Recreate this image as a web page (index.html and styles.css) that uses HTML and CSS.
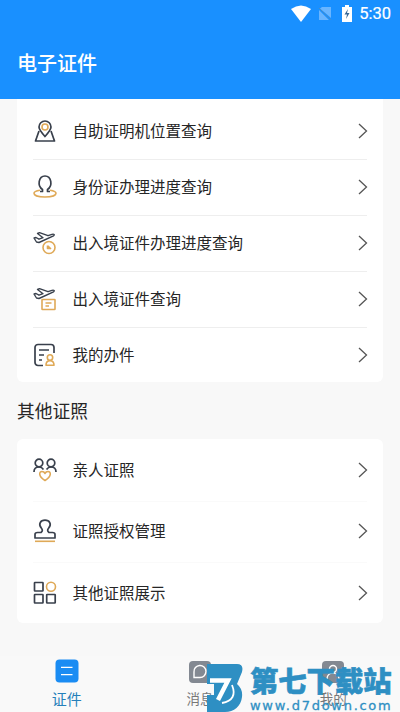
FILE: index.html
```html
<!DOCTYPE html>
<html lang="zh-CN">
<head>
<meta charset="utf-8">
<title>电子证件</title>
<link rel="stylesheet" href="styles.css">
</head>
<body>
<div class="app">
  <header class="header">
    <div class="status">
      <svg class="wifi" width="20" height="17" viewBox="0 0 20 17"><path d="M0 4Q10-3 20 4L10 17Z" fill="#fff"/></svg>
      <svg class="sim" width="14" height="15" viewBox="0 0 14 15"><path d="M4 1h9v11L2 2.500ZM1 4v10h10Z" fill="#69b5ff"/><path d="M1 2l12 12" stroke="#438dcc"/></svg>
      <svg class="battery" width="10" height="17" viewBox="0 0 10 17"><path d="M3 0h4v2h3v15H0V2h3Z" fill="#fff"/><path d="M6 4L2.500 9.500H5L4 14l3.500-6H5Z" fill="#376795"/></svg>
      <span class="time">5:30</span>
    </div>
    <h1 class="title">电子证件</h1>
  </header>
  <main class="content">
    <section class="card card-main">
      <div class="row">
        <svg class="icon" viewBox="0 0 24 24"><path d="M6 12L2.500 22h19L18 12"/><path d="M12 17.500C8 13 6 10.500 6 8a6 6 0 0 1 12 0c0 2.500-2 5-6 9.500Z"/><circle class="gold" cx="12" cy="8" r="3"/></svg>
        <span class="label">自助证明机位置查询</span><svg class="arrow" viewBox="0 0 10 16"><path d="M1 1l7.500 7L1 15"/></svg>
      </div>
      <div class="row">
        <svg class="icon" viewBox="0 0 24 24"><path class="gold" d="M7 15.300c-4 .6-6 1.700-6 3C1 20.500 6 22 12 22s11-1.500 11-3.700c0-1.300-2-2.400-6-3"/><path d="M7 16.500h2.500v-2C4 11 5.500 1 12 1s8 10 2.500 13.500v2H17"/></svg>
        <span class="label">身份证办理进度查询</span><svg class="arrow" viewBox="0 0 10 16"><path d="M1 1l7.500 7L1 15"/></svg>
      </div>
      <div class="row">
        <svg class="icon" viewBox="0 0 24 24"><path class="plane" d="M1 7l2-.5 3 1.700 4-1.500L4.500 2.500l2-.8 8.500 3 4-1.400c2-.6 3 .5 1.500 1.500L6 11.500 3.500 11Z"/><circle class="gold" cx="16" cy="16.500" r="6"/><path class="gold" d="M14.500 14.500v3h3M15 15l3 3"/></svg>
        <span class="label">出入境证件办理进度查询</span><svg class="arrow" viewBox="0 0 10 16"><path d="M1 1l7.500 7L1 15"/></svg>
      </div>
      <div class="row">
        <svg class="icon" viewBox="0 0 24 24"><path class="plane" d="M1 7l2-.5 3 1.700 4-1.500L4.500 2.500l2-.8 8.500 3 4-1.400c2-.6 3 .5 1.500 1.500L6 11.500 3.500 11Z"/><rect class="gold" x="9" y="12.500" width="13" height="10" rx=".5"/><path class="gold" d="M12.500 16h6M12.500 19h3.500"/></svg>
        <span class="label">出入境证件查询</span><svg class="arrow" viewBox="0 0 10 16"><path d="M1 1l7.500 7L1 15"/></svg>
      </div>
      <div class="row">
        <svg class="icon" viewBox="0 0 24 24"><path d="M10 22.500H5a3 3 0 0 1-3-3V4.500a3 3 0 0 1 3-3h13a3 3 0 0 1 3 3V10M6 7h10M6 12h5M6 17h3"/><circle class="gold" cx="17" cy="14.500" r="2.700"/><path class="gold" d="M13 22.300c0-6 8-6 8 0Z"/></svg>
        <span class="label">我的办件</span><svg class="arrow" viewBox="0 0 10 16"><path d="M1 1l7.500 7L1 15"/></svg>
      </div>
    </section>
    <h2 class="section-title">其他证照</h2>
    <section class="card card-other">
      <div class="row">
        <svg class="icon" viewBox="0 0 24 24"><circle cx="6" cy="5" r="3.800"/><circle cx="18" cy="5" r="3.800"/><path d="M1 14c0-3 1.500-5 5-5 2 0 3.500 1 4.500 2.500M23 14c0-3-1.500-5-5-5-2 0-3.500 1-4.500 2.500"/><path class="gold" d="M12 22.500c-7-4.500-6-9-3-9 1.500 0 2.500.8 3 2 .5-1.200 1.500-2 3-2 3 0 4 4.500-3 9Z"/></svg>
        <span class="label">亲人证照</span><svg class="arrow" viewBox="0 0 10 16"><path d="M1 1l7.500 7L1 15"/></svg>
      </div>
      <div class="row">
        <svg class="icon" viewBox="0 0 24 24"><path d="M2 19v-3.500c0-1.500 1-2 2.500-2H8c2-1.500 1.500-3 .3-4.500C5 5 7.500 1.200 12 1.200S19 5 15.700 9c-1.200 1.500-1.700 3 .3 4.500h3.500c1.500 0 2.500.5 2.500 2V19Z"/><path class="gold" d="M2 22.300h20"/></svg>
        <span class="label">证照授权管理</span><svg class="arrow" viewBox="0 0 10 16"><path d="M1 1l7.500 7L1 15"/></svg>
      </div>
      <div class="row">
        <svg class="icon" viewBox="0 0 24 24"><rect x="1.500" y="1.500" width="8.500" height="8.500" rx=".5"/><circle class="gold" cx="18" cy="5.800" r="4.500"/><rect x="1.500" y="13.500" width="8.500" height="8.500" rx=".5"/><rect x="13.700" y="13.500" width="8.500" height="8.500" rx=".5"/></svg>
        <span class="label">其他证照展示</span><svg class="arrow" viewBox="0 0 10 16"><path d="M1 1l7.500 7L1 15"/></svg>
      </div>
    </section>
  </main>
  <nav class="tabs">
    <div class="tab active"><svg width="24" height="24" viewBox="0 0 24 24"><rect x=".5" y=".5" width="23" height="23" rx="4" fill="#1a8cf3"/><path d="M6 8.300h11.500M6 15.600h11.500" stroke="#fff" stroke-width="1.200"/></svg><span>证件</span></div>
    <div class="tab"><svg width="24" height="24" viewBox="0 0 24 24"><rect x="1" y="2" width="22" height="22" rx="4" fill="#838992"/><path d="M6 18.500V13a6 6 0 1 1 6 5.500Z" fill="none" stroke="#fff" stroke-width="1.400"/></svg><span>消息</span></div>
    <div class="tab"><svg width="24" height="24" viewBox="0 0 24 24"><rect x="1" y="2" width="22" height="22" rx="4" fill="#838992"/><circle cx="12" cy="10" r="3.500" fill="none" stroke="#fff" stroke-width="1.400"/><path d="M6 20c0-8 12-8 12 0" fill="none" stroke="#fff" stroke-width="1.400"/></svg><span>我的</span></div>
  </nav>
  <div class="watermark">
    <svg class="mark" width="36" height="48" viewBox="0 0 36 48"><path d="M0 0H30Q37 0 35 8L30 20Q36 25 35 33C34 42 27 48 18 48H0V31H7V20H0Z" fill="#2e8fc3"/><path d="M3 16.500H21L11 36" fill="none" stroke="#fff" stroke-width="4.500"/><path d="M25 21Q31 36 15 39" fill="none" stroke="#fff" stroke-width="1.800"/></svg>
    <div class="brand"><span class="brand-name">第七下载站</span><span class="brand-url">www.d7down.com</span></div>
  </div>
</div>
</body>
</html>
```
FILE: styles.css
```css
* { box-sizing: border-box; }
body { margin: 0; font-family: "Noto Sans CJK SC", sans-serif; color: #262626; background: #f8f8f8; }
.app { position: relative; display: flex; flex-direction: column; width: 400px; height: 712px; overflow: hidden; }
.header { height: 99px; flex: none; background: #1990ff; color: #fff; }
.status { display: flex; align-items: center; height: 27px; padding: 0 9px 0 291px; }
.sim { margin-left: 7px; }
.battery { margin-left: 10px; }
.time { margin-left: auto; font: 400 16.5px/27px Roboto, sans-serif; -webkit-text-stroke: .2px #fff; }
.title { margin: 21px 0 0 17px; font-size: 20px; line-height: 30px; font-weight: 500; }
.content { height: 557px; flex: none; padding: 0 17px; }
.card { background: #fff; border-radius: 0 0 6px 6px; padding: 0 16px; }
.card-main { height: 283px; padding-top: 4px; }
.row { display: flex; align-items: center; height: 56px; box-shadow: 0 1px #eee; }
.row:last-child { box-shadow: none; }
.icon { width: 24px; height: 24px; flex: none; fill: none; stroke: #39404c; stroke-width: 1.7; stroke-linejoin: round; }
.icon .gold { stroke: #dfa957; stroke-width: 1.6; }
.icon .plane { stroke-width: 1.4; }
.label { flex: 1; margin-left: 15.5px; padding-bottom: 1px; font-size: 15.5px; line-height: 23px; white-space: nowrap; }
.arrow { width: 10px; height: 16px; margin-right: -1px; fill: none; stroke: #555; stroke-width: 1.3; }
.section-title { margin: 0; height: 57px; font-size: 17.8px; font-weight: 400; line-height: 57px; }
.card-other { height: 184px; border-radius: 6px; }
.card-other .row { height: 61.5px; box-shadow: 0 1px #fafafa; }
.card-other .row:last-child { box-shadow: none; }
.tabs { display: flex; height: 56px; background: #f9f9f9; }
.tab { display: flex; flex: 1; flex-direction: column; align-items: center; padding-top: 3px; color: #777; font-size: 13.5px; line-height: 31px; }
.tab span { height: 28px; }
.tab svg { flex: none; }
.active { color: #267fba; font-size: 15px; }
.active span { line-height: 31px; }
.watermark { position: absolute; left: 207px; top: 664px; display: flex; gap: 7px; color: #2e8fc3; }
.brand { display: flex; flex-direction: column; width: 143px; }
.brand-name { margin-top: -1px; font-size: 28.3px; line-height: 34px; font-weight: 900; -webkit-text-stroke: .6px #2e8fc3; white-space: nowrap; }
.brand-url { font: 13px/17px "DejaVu Sans", sans-serif; letter-spacing: 1.72px; white-space: nowrap; -webkit-text-stroke: .3px #2e8fc3; }
```
